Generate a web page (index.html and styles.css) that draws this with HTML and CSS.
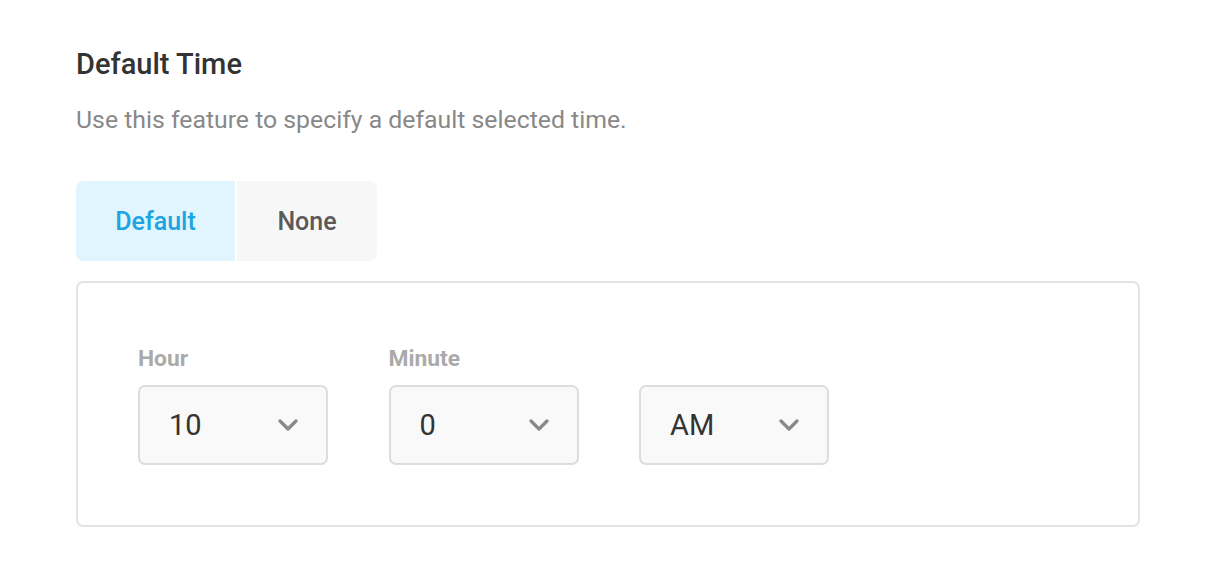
FILE: index.html
```html
<!DOCTYPE html>
<html>
<head>
<meta charset="utf-8">
<link rel="stylesheet" href="styles.css">
</head>
<body>
<div class="page">
  <h2 class="title">Default Time</h2>
  <p class="desc">Use this feature to specify a default selected time.</p>
  <div class="tabs">
    <div class="tab tab-active">Default</div>
    <div class="tab tab-none">None</div>
  </div>
  <div class="panel">
    <div class="field">
      <div class="label">Hour</div>
      <div class="select"><span class="value">10</span><svg class="chev" width="20" height="12" viewBox="0 0 20 12"><path d="M2 2 L10 10 L18 2" fill="none" stroke="#888" stroke-width="3.2" stroke-linecap="round" stroke-linejoin="round"/></svg></div>
    </div>
    <div class="field">
      <div class="label">Minute</div>
      <div class="select"><span class="value">0</span><svg class="chev" width="20" height="12" viewBox="0 0 20 12"><path d="M2 2 L10 10 L18 2" fill="none" stroke="#888" stroke-width="3.2" stroke-linecap="round" stroke-linejoin="round"/></svg></div>
    </div>
    <div class="field">
      <div class="label">&nbsp;</div>
      <div class="select"><span class="value">AM</span><svg class="chev" width="20" height="12" viewBox="0 0 20 12"><path d="M2 2 L10 10 L18 2" fill="none" stroke="#888" stroke-width="3.2" stroke-linecap="round" stroke-linejoin="round"/></svg></div>
    </div>
  </div>
</div>
</body>
</html>
```
FILE: styles.css
```css
* { box-sizing: border-box; }
body {
  margin: 0;
  background: #fff;
  font-family: Roboto, "Liberation Sans", sans-serif;
}
.page {
  padding: 46px 80px 0 76px;
  width: 1220px;
}
.title {
  margin: 0;
  font-size: 29px;
  line-height: 36px;
  font-weight: 500;
  color: #333;
}
.desc {
  margin: 23px 0 0;
  font-size: 24.8px;
  line-height: 30px;
  color: #888;
}
.tabs {
  display: flex;
  gap: 2px;
  margin-top: 46px;
}
.tab {
  height: 80px;
  display: flex;
  align-items: center;
  justify-content: center;
  font-size: 25px;
  font-weight: 500;
}
.tab-active {
  width: 159px;
  background: #e1f5fe;
  color: #1ca4e3;
  border-radius: 7px 0 0 7px;
}
.tab-none {
  width: 140px;
  background: #f7f7f7;
  color: #5a5a5a;
  border-radius: 0 7px 7px 0;
}
.panel {
  margin-top: 20px;
  width: 1064px;
  border: 2px solid #e3e3e3;
  border-radius: 7px;
  padding: 60px 60px 60px;
  display: flex;
  gap: 60.5px;
}
.field {
  display: flex;
  flex-direction: column;
}
.label {
  font-size: 22.8px;
  line-height: 28px;
  font-weight: 700;
  color: #aaa;
  margin: 2px 0 12px;
}
.select {
  width: 190px;
  height: 80px;
  border: 2px solid #ddd;
  border-radius: 7px;
  background: #f9f9f9;
  display: flex;
  align-items: center;
  justify-content: space-between;
  padding: 0 28px 0 29px;
}
.value {
  font-size: 29px;
  color: #333;
}
.chev { display: block; }
```
